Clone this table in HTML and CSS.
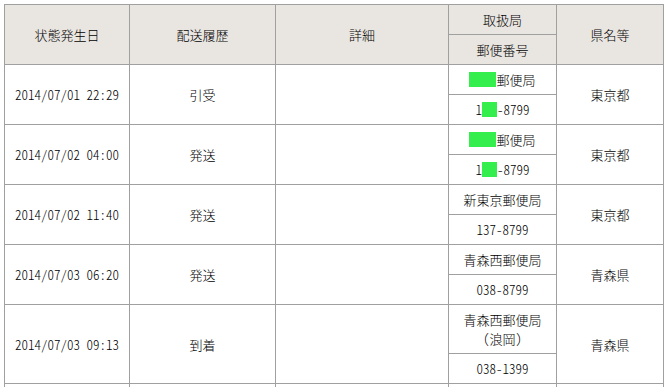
FILE: index.html
```html
<!DOCTYPE html>
<html lang="ja">
<head>
<meta charset="utf-8">
<link rel="stylesheet" href="styles.css">
</head>
<body>
<table class="track">
  <colgroup>
    <col class="c-date"><col class="c-hist"><col class="c-detail"><col class="c-office"><col class="c-pref">
  </colgroup>
  <thead>
    <tr>
      <th rowspan="2">状態発生日</th>
      <th rowspan="2">配送履歴</th>
      <th rowspan="2">詳細</th>
      <th>取扱局</th>
      <th rowspan="2">県名等</th>
    </tr>
    <tr><th>郵便番号</th></tr>
  </thead>
  <tbody>
    <tr>
      <td rowspan="2" class="num">2014/07/01 22:29</td>
      <td rowspan="2">引受</td>
      <td rowspan="2"></td>
      <td><span class="mask mask-w"></span>郵便局</td>
      <td rowspan="2">東京都</td>
    </tr>
    <tr><td class="num">1<span class="mask mask-n"></span>-8799</td></tr>
    <tr>
      <td rowspan="2" class="num">2014/07/02 04:00</td>
      <td rowspan="2">発送</td>
      <td rowspan="2"></td>
      <td><span class="mask mask-w"></span>郵便局</td>
      <td rowspan="2">東京都</td>
    </tr>
    <tr><td class="num">1<span class="mask mask-n"></span>-8799</td></tr>
    <tr>
      <td rowspan="2" class="num">2014/07/02 11:40</td>
      <td rowspan="2">発送</td>
      <td rowspan="2"></td>
      <td>新東京郵便局</td>
      <td rowspan="2">東京都</td>
    </tr>
    <tr><td class="num">137-8799</td></tr>
    <tr>
      <td rowspan="2" class="num">2014/07/03 06:20</td>
      <td rowspan="2">発送</td>
      <td rowspan="2"></td>
      <td>青森西郵便局</td>
      <td rowspan="2">青森県</td>
    </tr>
    <tr><td class="num">038-8799</td></tr>
    <tr>
      <td rowspan="2" class="num">2014/07/03 09:13</td>
      <td rowspan="2">到着</td>
      <td rowspan="2"></td>
      <td>青森西郵便局<br>（浪岡）</td>
      <td rowspan="2">青森県</td>
    </tr>
    <tr><td class="num">038-1399</td></tr>
    <tr>
      <td rowspan="2" class="num">&nbsp;</td>
      <td rowspan="2">&nbsp;</td>
      <td rowspan="2"></td>
      <td>&nbsp;</td>
      <td rowspan="2">&nbsp;</td>
    </tr>
    <tr><td class="num">&nbsp;</td></tr>
  </tbody>
</table>
</body>
</html>
```

FILE: styles.css
```css
html, body {
  margin: 0;
  padding: 0;
  background: #ffffff;
}
body {
  padding: 4px;
  font-family: "Noto Sans CJK JP", "Noto Sans Mono CJK JP", sans-serif;
  font-size: 13px;
  font-weight: 300;
  color: #000000;
}
.track {
  border-collapse: collapse;
  table-layout: fixed;
  width: 660px;
}
.c-date { width: 125px; }
.c-hist { width: 146px; }
.c-detail { width: 173px; }
.c-office { width: 108px; }
.c-pref { width: 107px; }
.track th,
.track td {
  border: 1px solid #a0a0a0;
  padding: 5px 2px;
  line-height: 19px;
  height: 19px;
  text-align: center;
  vertical-align: middle;
  font-weight: 300;
  font-feature-settings: "hwid" 1;
}
.track th {
  background: #e9e5e1;
}
.mask {
  display: inline-block;
  background: #33ee4d;
  vertical-align: -2px;
  height: 15px;
}
.mask-w { width: 27px; }
.mask-n { width: 15px; }
```
